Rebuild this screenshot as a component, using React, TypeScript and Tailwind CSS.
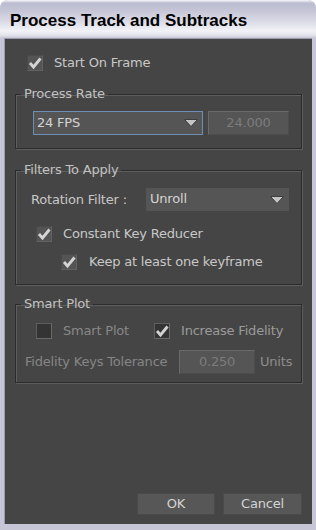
import React from "react";

const font = { fontFamily: '"DejaVu Sans", "Liberation Sans", sans-serif' };

type CheckProps = { checked?: boolean; dim?: boolean };

const CheckBox = ({ checked, dim }: CheckProps) => (
  <div
    className={`w-[16px] h-[16px] shrink-0 border flex items-center justify-center ${
      dim
        ? "bg-[#343434] border-t-[#5e5e5e] border-l-[#5e5e5e] border-b-[#6a6a6a] border-r-[#6a6a6a]"
        : "bg-[#545454] border-t-[#4a4a4a] border-l-[#4a4a4a] border-b-[#626262] border-r-[#626262]"
    }`}
  >
    {checked && (
      <svg width="14" height="14" viewBox="0 0 14 14">
        <polyline
          points="2,7 5.5,11 12.5,2.5"
          fill="none"
          stroke={dim ? "#d2d2d2" : "#d4d4d4"}
          strokeWidth="2.8"
        />
      </svg>
    )}
  </div>
);

const Arrow = () => (
  <svg width="14" height="8" viewBox="0 0 14 8">
    <polygon points="0.5,0.5 13.5,0.5 7,7.5" fill="#c4c4c4" stroke="#3e3e3e" />
  </svg>
);

type GroupProps = { title: string; className?: string; children: React.ReactNode };

const Group = ({ title, className, children }: GroupProps) => (
  <fieldset
    className={`mx-[10px] border border-[#2b2b2b] shadow-[1px_1px_0_#5e5e5e,inset_1px_1px_0_#5e5e5e] ${className ?? ""}`}
  >
    <legend className="ml-[5px] px-[3px] h-[16px] leading-[16px] text-[#c2c2c2]">{title}</legend>
    {children}
  </fieldset>
);

export default function App() {
  return (
    <div
      className="w-[316px] h-[530px] flex flex-col rounded-t-[8px] bg-[#c6c6d6] overflow-hidden text-[13px] leading-[16px] tracking-[-0.2px]"
      style={font}
    >
      <div className="h-[38px] shrink-0 flex items-center pl-[10px] pt-[4px] rounded-t-[8px] bg-[linear-gradient(to_bottom,#f8f8fc_0px,#bcbcd0_3px,#c4c4d6_10px,#dcdce8_22px,#f2f2f6_31px,#e4e4ec_35px,#c8c8d6_38px)]">
        <span
          className="text-[17px] leading-[20px] font-bold text-black tracking-normal"
          style={{ fontFamily: '"Liberation Sans", Arial, sans-serif' }}
        >
          Process Track and Subtracks
        </span>
      </div>

      <div className="flex-1 mx-[4px] mb-[6px] bg-[#454545] border-t border-l border-[#9a9ab0] flex flex-col">
        <div className="pt-[16px] pl-[22px] flex items-center gap-[11px] text-[#c8c8c8]">
          <CheckBox checked />
          <span>Start On Frame</span>
        </div>

        <Group title="Process Rate" className="mt-[15px] pt-[9px] pb-[13px]">
          <div className="flex gap-[5px] pl-[17px]">
            <div className="w-[170px] h-[24px] bg-[#555555] border border-[#6d8db4] flex items-center justify-between pl-[3px] pr-[4px] text-[#d4d4d4]">
              <span>24 FPS</span>
              <Arrow />
            </div>
            <div className="w-[81px] h-[24px] bg-[#555555] border border-t-[#6a6a6a] border-l-[#6a6a6a] border-b-[#4c4c4c] border-r-[#4c4c4c] flex items-center justify-center text-[#7c7c7c]">
              24.000
            </div>
          </div>
        </Group>

        <Group title="Filters To Apply" className="mt-[13px] pt-[10px] pb-[14px]">
          <div className="flex items-center pl-[15px]">
            <span className="w-[115px] text-[#c8c8c8]">Rotation Filter :</span>
            <div className="w-[143px] h-[23px] bg-[#555555] flex items-center justify-between pl-[4px] pr-[5px] text-[#d4d4d4]">
              <span className="-mt-[2px]">Unroll</span>
              <Arrow />
            </div>
          </div>
          <div className="mt-[15px] pl-[20px] flex items-center gap-[11px] text-[#c8c8c8]">
            <CheckBox checked />
            <span>Constant Key Reducer</span>
          </div>
          <div className="mt-[12px] pl-[45px] flex items-center gap-[12px] text-[#c8c8c8]">
            <CheckBox checked />
            <span>Keep at least one keyframe</span>
          </div>
        </Group>

        <Group title="Smart Plot" className="mt-[11px] pt-[11px] pb-[8px]">
          <div className="flex items-center pl-[20px]">
            <CheckBox dim />
            <span className="ml-[11px] w-[91px] text-[#888888]">Smart Plot</span>
            <CheckBox checked dim />
            <span className="ml-[11px] text-[#9a9a9a]">Increase Fidelity</span>
          </div>
          <div className="mt-[11px] pl-[9px] flex items-center text-[#868686]">
            <span className="w-[154px]">Fidelity Keys Tolerance</span>
            <div className="w-[76px] h-[24px] bg-[#555555] border border-t-[#6a6a6a] border-l-[#6a6a6a] border-b-[#4c4c4c] border-r-[#4c4c4c] flex items-center justify-center text-[#7c7c7c]">
              0.250
            </div>
            <span className="ml-[5px] text-[#8e8e8e]">Units</span>
          </div>
        </Group>

        <div className="mt-auto mb-[9px] mr-[10px] flex justify-end gap-[8px] text-[#d4d4d4]">
          <button className="w-[78px] h-[22px] bg-[#575757] border border-[#4a4a4a]">OK</button>
          <button className="w-[79px] h-[22px] bg-[#575757] border border-[#4a4a4a]">Cancel</button>
        </div>
      </div>
    </div>
  );
}
